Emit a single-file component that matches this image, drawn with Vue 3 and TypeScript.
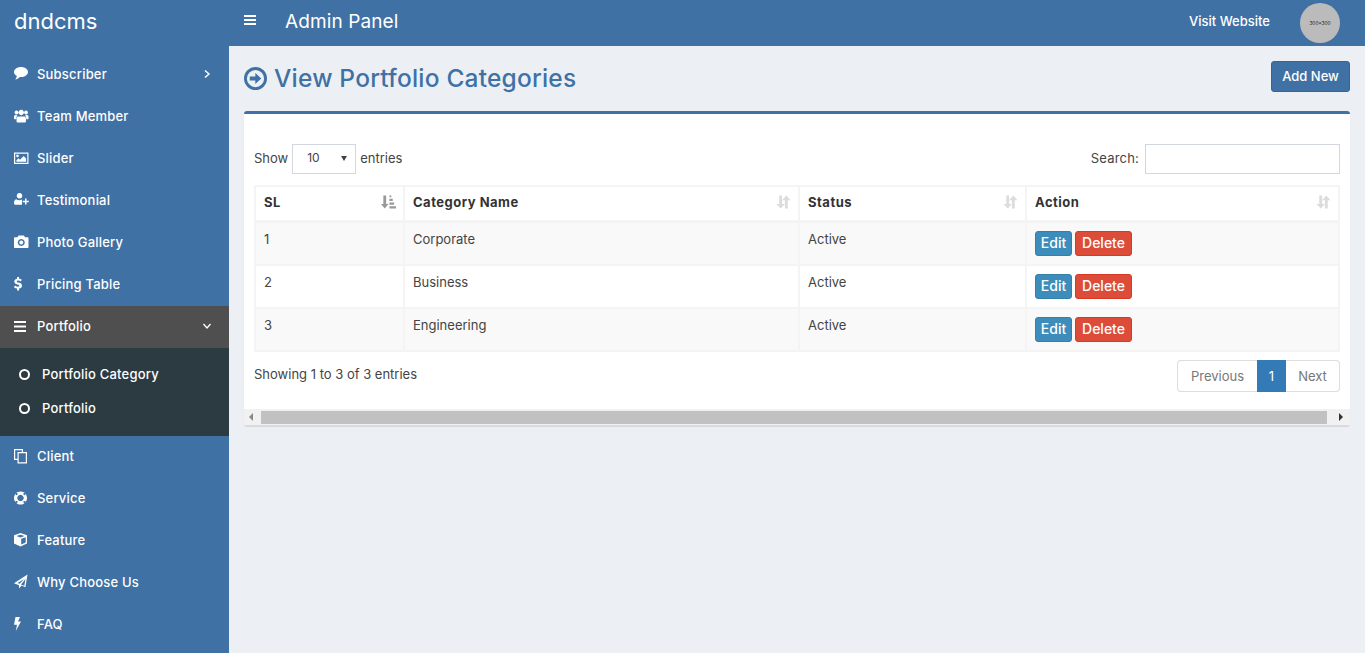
<script setup lang="ts">
interface MenuItem {
  label: string;
  icon: string;
  caret?: 'right' | 'down';
  active?: boolean;
}

const menuTop: MenuItem[] = [
  { label: 'Subscriber', icon: 'comment', caret: 'right' },
  { label: 'Team Member', icon: 'users' },
  { label: 'Slider', icon: 'picture' },
  { label: 'Testimonial', icon: 'userplus' },
  { label: 'Photo Gallery', icon: 'camera' },
  { label: 'Pricing Table', icon: 'dollar' },
  { label: 'Portfolio', icon: 'bars', caret: 'down', active: true },
];
const subMenu = ['Portfolio Category', 'Portfolio'];
const menuBottom: MenuItem[] = [
  { label: 'Client', icon: 'copy' },
  { label: 'Service', icon: 'lifering' },
  { label: 'Feature', icon: 'cube' },
  { label: 'Why Choose Us', icon: 'plane' },
  { label: 'FAQ', icon: 'bolt' },
];

const columns = [
  { name: 'SL', cls: 'c1', sorted: true },
  { name: 'Category Name', cls: 'c2', sorted: false },
  { name: 'Status', cls: 'c3', sorted: false },
  { name: 'Action', cls: 'c4', sorted: false },
];
const rows = [
  { id: 1, name: 'Corporate', status: 'Active' },
  { id: 2, name: 'Business', status: 'Active' },
  { id: 3, name: 'Engineering', status: 'Active' },
];

const iconPaths: Record<string, string> = {
  comment: 'M7 1C3.100 1 0 3.200 0 6c0 1.700 1.100 3.200 2.900 4.100-.2 1.200-.9 2.300-1.600 3.400 1.800-.3 3.500-1.300 4.600-2.500.4 0 .7.100 1.100.100 3.900 0 7-2.300 7-5.100S10.900 1 7 1z',
  users: 'M2.500 2.600a1.900 1.900 0 1 0 .01 0zM12 2.600a1.900 1.900 0 1 0 .01 0zM7.250 1.800a2.700 2.700 0 1 0 .01 0zM3.500 8.500h7.500c1 .5 1 2.500 1 4.500 0 1-.7 1.500-1.500 1.500H4c-.8 0-1.500-.5-1.500-1.500 0-2 0-4 1-4.500zM0 8.500c0-1 1-1.500 2-1.500 .5 0 1 .2 1.400.5-.8.7-1.200 2-1.200 3.700H.8C.3 11.200 0 10.900 0 10.400zM14.500 8.500c0-1-1-1.500-2-1.500-.5 0-1 .2-1.400.5.8.7 1.200 2 1.200 3.700h1.400c.5 0 .8-.3.8-.8z',
  picture: 'M0 2.500h14.500V14H0zM1.200 3.700v9.100h12.100V3.700zM3.500 4.500a1.400 1.400 0 1 0 .01 0zM2.400 11.800v-1.500L4.500 8.300 6 9.700 9.700 6l2.400 2.500v3.300z',
  userplus: 'M5.500 1a2.800 2.800 0 1 0 .01 0zM2.200 7.300c1.500 1 3.800 1.200 5.800.3v3.100h0v2H1.500C.5 12.700 0 12.100 0 11.200c0-1.800.6-3.400 2.200-3.900zM11 6.500h1.500v2.200h2.300v1.500h-2.300v2.300H11v-2.300H8.700V8.700H11z',
  camera: 'M4.500 1.500h5.500l1 1.800h2.500c.6 0 1 .4 1 1v8.700c0 .6-.4 1-1 1H1c-.6 0-1-.4-1-1V4.300c0-.6.4-1 1-1h2.500zM7.250 5a3.500 3.500 0 1 0 .01 0zM7.250 6.500a2 2 0 1 1-.01 0z',
  dollar: 'M3.100 1h2v1.700c1.100.1 2 .5 2.700 1L6.900 5.500C6 4.900 5.100 4.600 4.100 4.600c-.8 0-1.300.3-1.300.8 0 .6.6.8 1.900 1.200 1.900.5 3.300 1.300 3.300 3.100 0 1.500-1.100 2.600-2.900 2.900v1.900h-2v-1.900c-1.200-.1-2.300-.6-3.100-1.300l1-1.800c1 .8 2 1.200 3 1.200.9 0 1.400-.3 1.400-.9s-.6-.9-2-1.300C1.600 8 .3 7.200.3 5.500.3 4.100 1.400 3 3.100 2.800z',
  bars: 'M0 3h12v2H0zM0 7.500h12v2H0zM0 12h12v2H0z',
  copy: 'M0 1h9v3H7.800V2.200H1.200v8.600h2.300V12H0zM3.500 4H13v11.500H3.500zM4.700 5.200v9.100h7.100V5.200z',
  lifering: 'M6.500 1.500a6.500 6.500 0 1 0 .01 0zM6.500 4.800a3.200 3.200 0 1 1-.01 0zM2.600 3.100a1 1 0 1 0 .01 0zM10.400 3.100a1 1 0 1 0 .01 0zM2.600 10.900a1 1 0 1 0 .01 0zM10.400 10.900a1 1 0 1 0 .01 0z',
  cube: 'M6.500 1L13 3.300v8.200L6.500 14.500 0 11.500V3.300zM6.500 2.700L2.500 4.100 6.500 5.600l4-1.500zM7.200 6.800v5.800l4.500-2V5.200z',
  plane: 'M13.500 .5L11.400 13.200 7.600 11.600 5 14.500V11.300L0 9.200zM10 5L3.500 9l2.100.8zM11.500 5L7 10.500l3.300 1.300z',
  bolt: 'M1.500 1H6L4 5.500h3L1.800 15 3 8.700H0z',
};
</script>

<template>
  <div class="layout">
    <aside class="sidebar">
      <div class="logo">dndcms</div>
      <nav class="menu">
        <a v-for="item in menuTop" :key="item.label" class="menu-item" :class="{ active: item.active }">
          <svg class="menu-icon" viewBox="0 0 16 16" fill="#fff" fill-rule="evenodd"><path :d="iconPaths[item.icon]" /></svg>
          <span>{{ item.label }}</span>
          <svg v-if="item.caret === 'right'" class="caret" viewBox="0 0 10 10" fill="none" stroke="#fff" stroke-width="1.500"><path d="M3 1.500L7 5 3 8.500" /></svg>
          <svg v-if="item.caret === 'down'" class="caret" viewBox="0 0 10 10" fill="none" stroke="#fff" stroke-width="1.300"><path d="M1.500 3L5 7l3.500-4" /></svg>
        </a>
        <div class="submenu">
          <a v-for="sub in subMenu" :key="sub" class="sub-item"><i class="ring"></i>{{ sub }}</a>
        </div>
        <a v-for="item in menuBottom" :key="item.label" class="menu-item">
          <svg class="menu-icon" viewBox="0 0 16 16" fill="#fff" fill-rule="evenodd"><path :d="iconPaths[item.icon]" /></svg>
          <span>{{ item.label }}</span>
        </a>
      </nav>
    </aside>

    <div class="main">
      <header class="topbar">
        <svg class="burger" viewBox="0 0 12 12" fill="#fff"><path d="M0 1h12v2H0zM0 5h12v2H0zM0 9h12v2H0z" /></svg>
        <span class="panel-title">Admin Panel</span>
        <a class="visit">Visit Website</a>
        <div class="avatar">300x300</div>
      </header>

      <section class="content">
        <div class="page-head">
          <h1>
            <svg class="head-icon" viewBox="0 0 24 24"><circle cx="12" cy="12" r="10.500" fill="none" stroke="#3f71a5" stroke-width="3" /><path d="M6 10h5.800V6.300l6.200 5.700-6.200 5.700V14H6z" fill="#3f71a5" /></svg>
            View Portfolio Categories
          </h1>
          <button class="add-btn">Add New</button>
        </div>

        <div class="box">
          <div class="box-body">
            <div class="tools">
              <label class="length">Show <span class="select">10<i class="arrow"></i></span> entries</label>
              <label class="search">Search: <span class="search-input"></span></label>
            </div>
            <table>
              <thead>
                <tr>
                  <th v-for="col in columns" :key="col.name" :class="col.cls">
                    <div class="th-inner">
                      {{ col.name }}
                      <svg class="sort" :class="{ on: col.sorted }" viewBox="0 0 16 14" fill="currentColor">
                        <path v-if="col.sorted" d="M2.500 0h3v9h2.500L4 14 0 9h2.500zM9 0h2v2H9zM9 3.500h3.500v2.500H9zM9 7.500h5v2.500H9zM9 11.500h7V14H9z" />
                        <path v-else d="M3.500 0h3v9h3L5 14 .5 9h3zM11 0l4.500 5h-3v9h-3V5h-3z" />
                      </svg>
                    </div>
                  </th>
                </tr>
              </thead>
              <tbody>
                <tr v-for="(row, i) in rows" :key="row.id" :class="{ odd: i % 2 === 0 }">
                  <td>{{ row.id }}</td>
                  <td>{{ row.name }}</td>
                  <td>{{ row.status }}</td>
                  <td class="acts">
                    <div class="btns">
                      <button class="btn edit">Edit</button>
                      <button class="btn del">Delete</button>
                    </div>
                  </td>
                </tr>
              </tbody>
            </table>
            <div class="foot">
              <span class="info">Showing 1 to 3 of 3 entries</span>
              <div class="pager">
                <a class="pg first">Previous</a>
                <a class="pg current">1</a>
                <a class="pg last">Next</a>
              </div>
            </div>
          </div>
          <div class="hscroll">
            <i class="tri left"></i>
            <div class="thumb"></div>
            <i class="tri right"></i>
          </div>
        </div>
      </section>
    </div>
  </div>
</template>

<style>
html, body { margin: 0; overflow: hidden; }
</style>

<style scoped>
* { box-sizing: border-box; }
.layout {
  display: flex;
  width: 1365px;
  height: 653px;
  overflow: hidden;
  background: #ecf0f5;
  font-family: Inter, "Liberation Sans", sans-serif;
  font-size: 13px;
  color: #444;
}
.sidebar { width: 229px; flex: none; background: #3f71a5; color: #fff; }
.logo { height: 46px; padding: 6px 0 0 14px; font-size: 22px; line-height: 30px; }
.menu { padding-top: 8px; }
.menu-item {
  display: flex;
  align-items: center;
  height: 42px;
  padding: 0 15px 2px 14px;
  font-size: 13px;
  font-weight: 500;
  letter-spacing: .2px;
  color: #fff;
}
.menu-item.active { background: #4f4f4f; }
.menu-icon { width: 16px; height: 16px; margin-right: 7px; flex: none; }
.caret { width: 10px; height: 10px; margin-left: auto; margin-right: 2px; }
.submenu { background: #2c3b41; padding: 9px 0 11px; }
.sub-item { display: flex; align-items: center; height: 34px; padding-left: 19px; font-size: 13px; font-weight: 500; letter-spacing: .2px; color: #fff; }
.ring { width: 11px; height: 11px; border: 2px solid #fff; border-radius: 50%; margin-right: 12px; }
.main { flex: 1; min-width: 0; }
.topbar { display: flex; align-items: center; height: 46px; background: #3f71a5; color: #fff; padding: 0 25px 0 15px; }
.burger { width: 12px; height: 12px; margin-right: 29px; margin-bottom: 7px; }
.panel-title { font-size: 19px; margin-bottom: 4px; letter-spacing: .1px; }
.visit { margin-left: auto; font-size: 13px; font-weight: 500; margin-bottom: 5px; }
.avatar {
  width: 40px;
  height: 40px;
  margin-left: 30px;
  border-radius: 50%;
  background: #bbb;
  color: #222;
  font-size: 4.800px;
  display: flex;
  align-items: center;
  justify-content: center;
}
.content { padding: 15px 15px 0; }
.page-head { display: flex; justify-content: space-between; height: 50px; }
h1 { display: flex; align-items: center; gap: 7px; margin: 0; height: 34px; font-size: 24.500px; font-weight: 500; letter-spacing: .2px; color: #3f71a5; }
.head-icon { width: 23px; height: 23px; }
.add-btn {
  width: 79px;
  height: 31px;
  padding: 0 0 2px;
  background: #3f71a5;
  border: 1px solid #37659a;
  border-radius: 3px;
  color: #fff;
  font: 500 13px Inter, "Liberation Sans", sans-serif;
}
.box { background: #fff; border-top: 3px solid #3f71a5; border-radius: 3px; width: 1106px; box-shadow: 0 1px 1px rgba(0,0,0,.1); }
.box-body { padding: 30px 10px 0; height: 295px; }
.tools { display: flex; justify-content: space-between; align-items: flex-start; height: 30px; }
.length, .search { display: flex; align-items: center; font-size: 13px; }
.select {
  position: relative;
  width: 64px;
  height: 30px;
  margin: 0 4px -2px;
  padding-left: 14px;
  line-height: 25px;
  font-size: 12px;
  border: 1px solid #d2d6de;
}
.arrow { position: absolute; right: 8px; top: 11px; border: 3px solid transparent; border-top: 5px solid #444; border-bottom: 0; }
.search-input { width: 195px; height: 30px; margin: 0 0 -2px 6px; border: 1px solid #d2d6de; }
.search { letter-spacing: .2px; }
table { width: 1086px; margin-top: 11px; border-collapse: separate; border-spacing: 0; table-layout: fixed; border: 1px solid #f4f4f4; }
th, td { border: 1px solid #f4f4f4; padding: 6px 8px 0; text-align: left; vertical-align: top; }
thead th { height: 36px; border-bottom-width: 2px; font-size: 13px; font-weight: 700; letter-spacing: .5px; color: #333; vertical-align: middle; padding: 0 7px 3px 8px; }
.th-inner { display: flex; align-items: center; justify-content: space-between; }
.sort { width: 15px; height: 14px; color: #dcdcdc; }
.sort.on { color: #999; }
.c1 { width: 149px; }
.c2 { width: 395px; }
.c3 { width: 227px; }
td { height: 43px; font-size: 13px; line-height: 20px; }
tr.odd td { background: #f9f9f9; }
td.acts { padding-top: 8px; }
.btns { display: flex; gap: 3px; }
.btn { height: 25px; padding: 0 0 2px; border-radius: 3px; color: #fff; font: 500 14px Inter, "Liberation Sans", sans-serif; }
.edit { width: 37px; background: #3c8dbc; border: 1px solid #367fa9; }
.del { width: 57px; background: #dd4b39; border: 1px solid #d73925; }
.foot { display: flex; justify-content: space-between; margin-top: 8px; }
.info { padding-top: 6px; font-size: 13px; }
.pager { display: flex; height: 32px; font-size: 13px; }
.pg { display: flex; align-items: center; justify-content: center; border: 1px solid #ddd; color: #777; }
.first { width: 80px; border-radius: 4px 0 0 4px; border-right: 0; }
.current { width: 29px; background: #337ab7; border-color: #337ab7; color: #fff; }
.last { width: 54px; border-radius: 0 4px 4px 0; border-left: 0; }
.hscroll { display: flex; align-items: center; height: 17px; background: #f1f1f1; border-bottom: 1px solid #ddd; padding: 0 7px 0 5px; }
.thumb { flex: 1; height: 13px; margin: 0 12px 0 8px; background: #c1c1c1; }
.tri { width: 0; height: 0; border: 4px solid transparent; }
.tri.left { border-left: 0; border-right: 4px solid #888; }
.tri.right { border-right: 0; border-left: 4px solid #333; }
</style>
